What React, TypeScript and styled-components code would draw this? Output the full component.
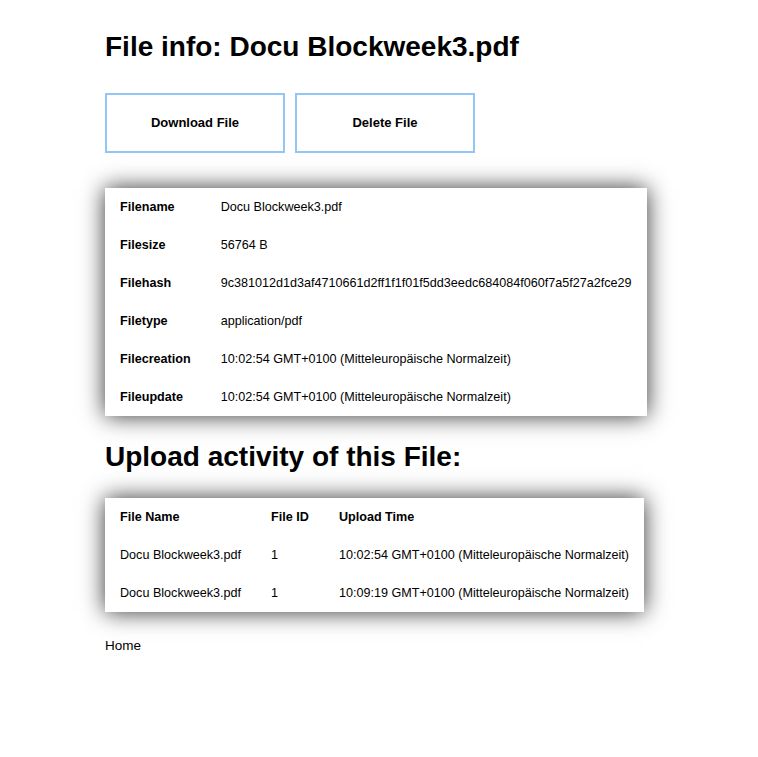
import React from "react";
import styled, { createGlobalStyle } from "styled-components";

const GlobalStyle = createGlobalStyle`
  html, body {
    margin: 0;
    padding: 0;
    background: #ffffff;
  }
  body {
    font-family: "Liberation Sans", Arial, sans-serif;
    color: #000;
  }
`;

const Page = styled.main`
  padding: 31px 0 40px 105px;
  display: flex;
  flex-direction: column;
  align-items: flex-start;
`;

const Title = styled.h1<{ $gap?: number }>`
  margin: ${(p) => p.$gap ?? 0}px 0 0 0;
  font-size: 28px;
  line-height: 32px;
  font-weight: 700;
`;

const ButtonRow = styled.div`
  display: flex;
  gap: 10px;
  margin-top: 30px;
`;

const ActionButton = styled.button`
  width: 180px;
  height: 60px;
  box-sizing: border-box;
  border: 2px solid #92c6f8;
  padding: 0 0 2px 0;
  background: #ffffff;
  font-family: "Liberation Sans", Arial, sans-serif;
  font-size: 13px;
  font-weight: 700;
  color: #000;
  cursor: pointer;
`;

const Card = styled.table<{ $gap: number }>`
  margin-top: ${(p) => p.$gap}px;
  border-collapse: collapse;
  background: #ffffff;
  box-shadow: 0 0 22px rgba(0, 0, 0, 0.8);
  font-size: 12.6px;
`;

const Row = styled.tr`
  height: 38px;
`;

const HeadCell = styled.th`
  padding: 0 15px;
  text-align: left;
  font-weight: 700;
  white-space: nowrap;
`;

const Cell = styled.td`
  padding: 0 15px;
  text-align: left;
  white-space: nowrap;
`;

const HomeLink = styled.a`
  margin-top: 26px;
  font-size: 13.5px;
  line-height: 16px;
  color: #000;
  text-decoration: none;
`;

const info: [string, string][] = [
  ["Filename", "Docu Blockweek3.pdf"],
  ["Filesize", "56764 B"],
  ["Filehash", "9c381012d1d3af4710661d2ff1f1f01f5dd3eedc684084f060f7a5f27a2fce29"],
  ["Filetype", "application/pdf"],
  ["Filecreation", "10:02:54 GMT+0100 (Mitteleuropäische Normalzeit)"],
  ["Fileupdate", "10:02:54 GMT+0100 (Mitteleuropäische Normalzeit)"],
];

const uploads = [
  { name: "Docu Blockweek3.pdf", id: "1", time: "10:02:54 GMT+0100 (Mitteleuropäische Normalzeit)" },
  { name: "Docu Blockweek3.pdf", id: "1", time: "10:09:19 GMT+0100 (Mitteleuropäische Normalzeit)" },
];

export default function App() {
  return (
    <>
      <GlobalStyle />
      <Page>
        <Title>File info: Docu Blockweek3.pdf</Title>
        <ButtonRow>
          <ActionButton>Download File</ActionButton>
          <ActionButton>Delete File</ActionButton>
        </ButtonRow>
        <Card $gap={35}>
          <tbody>
            {info.map(([k, v]) => (
              <Row key={k}>
                <HeadCell>{k}</HeadCell>
                <Cell>{v}</Cell>
              </Row>
            ))}
          </tbody>
        </Card>
        <Title $gap={25}>Upload activity of this File:</Title>
        <Card $gap={25}>
          <thead>
            <Row>
              <HeadCell>File Name</HeadCell>
              <HeadCell>File ID</HeadCell>
              <HeadCell>Upload Time</HeadCell>
            </Row>
          </thead>
          <tbody>
            {uploads.map((u) => (
              <Row key={u.time}>
                <Cell>{u.name}</Cell>
                <Cell>{u.id}</Cell>
                <Cell>{u.time}</Cell>
              </Row>
            ))}
          </tbody>
        </Card>
        <HomeLink href="#">Home</HomeLink>
      </Page>
    </>
  );
}
